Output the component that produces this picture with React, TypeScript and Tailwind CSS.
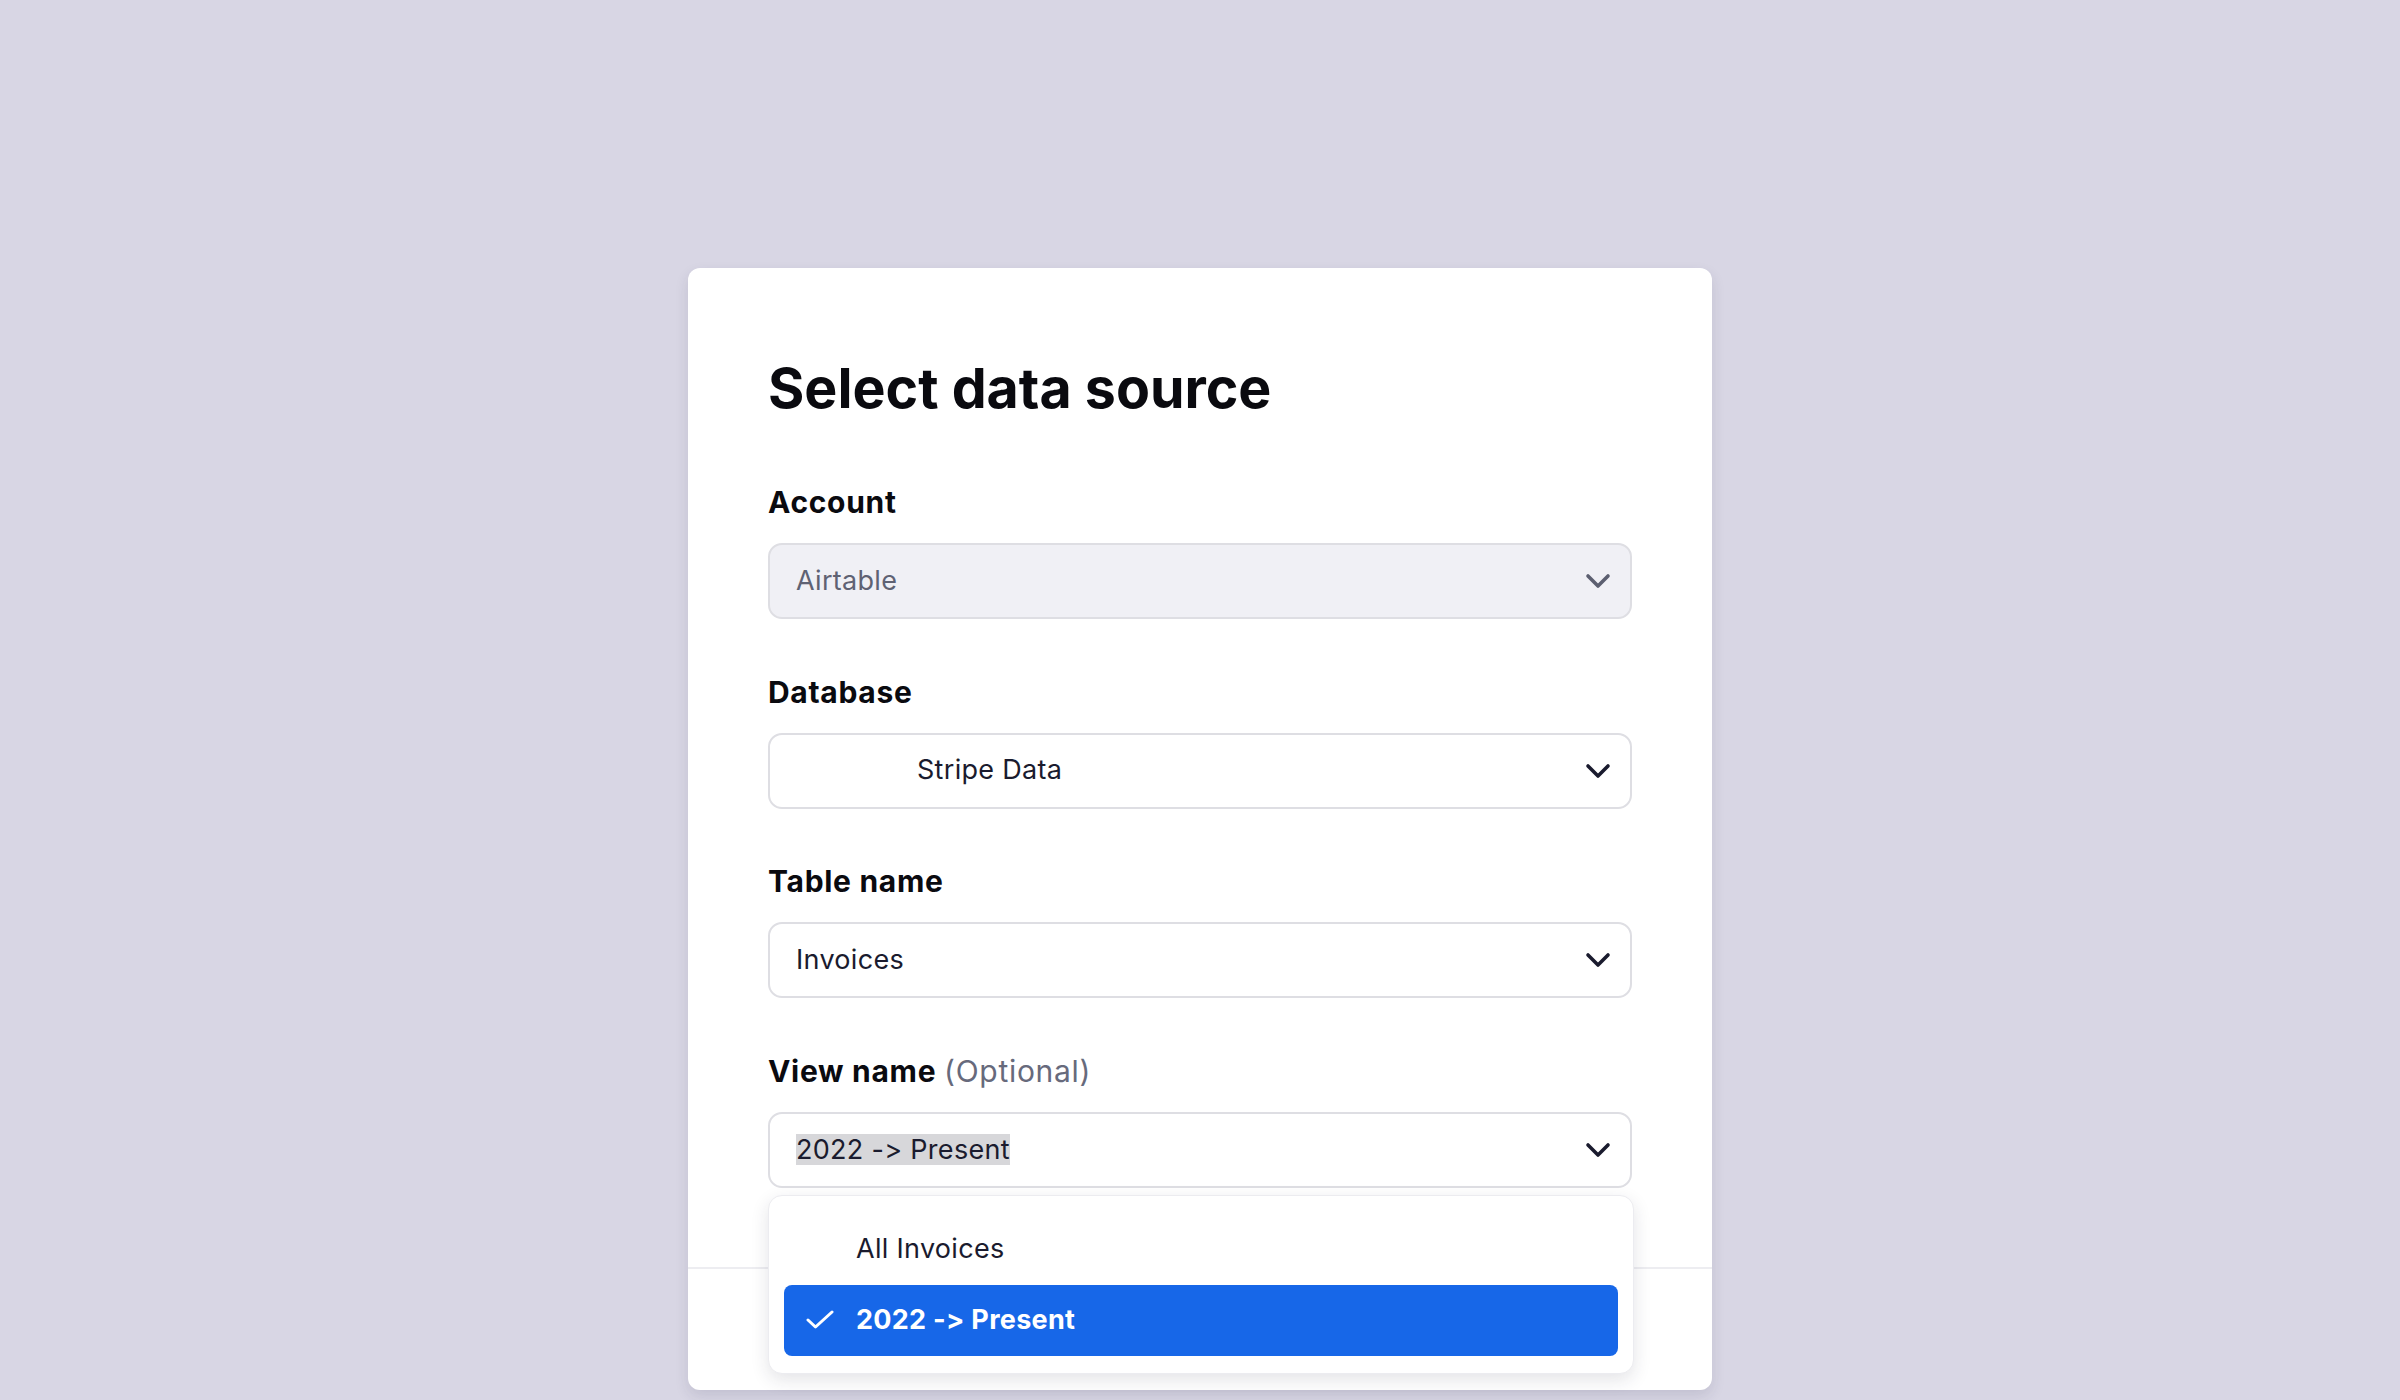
import type { ReactNode } from 'react';

const Chevron = ({ muted = false }: { muted?: boolean }) => (
  <svg width="26" height="16" viewBox="0 0 26 16" fill="none" className="shrink-0">
    <path
      d="M3 3L13 13L23 3"
      stroke={muted ? '#5c5f70' : '#1a1b2e'}
      strokeWidth="3.6"
      strokeLinecap="round"
      strokeLinejoin="round"
    />
  </svg>
);

const Field = ({ label, children }: { label: ReactNode; children: ReactNode }) => (
  <div className="flex flex-col">
    <label className="text-[30px] leading-[36px] font-bold text-[#0a0a0f] tracking-[0.7px] mb-[23px]">{label}</label>
    {children}
  </div>
);

const SelectBox = ({
  children,
  disabled = false,
}: {
  children: ReactNode;
  disabled?: boolean;
}) => (
  <div
    className={`h-[76px] rounded-[14px] border-2 border-[#dedee3] flex items-center justify-between pl-[26px] pr-[19px] text-[27px] tracking-[0.3px] ${
      disabled ? 'bg-[#f0f0f5] text-[#5f6273]' : 'bg-white text-[#1a1b2e]'
    }`}
  >
    <div className="flex items-center">{children}</div>
    <Chevron muted={disabled} />
  </div>
);

export default function App() {
  return (
    <div
      className="min-h-screen bg-[#d8d6e4] flex justify-center pt-[268px] [font-feature-settings:'calt'_0]"
      style={{ fontFamily: 'Inter, "Noto Sans", sans-serif' }}
    >
      <div className="w-[1024px] h-[1122px] bg-white rounded-[12px] shadow-[0_6px_14px_rgba(40,40,70,0.12)] flex flex-col">
        {/* Form */}
        <div className="px-[80px] pt-[87px] flex-1">
          <h1 className="text-[55.5px] leading-[65px] font-bold text-[#0a0a0f] mb-[64px]">
            Select data source
          </h1>

          <div className="flex flex-col gap-[54.5px]">
            <Field label="Account">
              <SelectBox disabled>Airtable</SelectBox>
            </Field>

            <Field label="Database">
              <SelectBox>
                <span className="ml-[121px]">Stripe Data</span>
              </SelectBox>
            </Field>

            <Field label="Table name">
              <SelectBox>Invoices</SelectBox>
            </Field>

            <Field
              label={
                <>
                  View name <span className="font-normal text-[#676a7c]">(Optional)</span>
                </>
              }
            >
              <div className="relative">
                <SelectBox>
                  <span className="bg-[#d7d7da] leading-[31px]">2022 -&gt; Present</span>
                </SelectBox>

                {/* Open menu */}
                <div className="absolute left-0 right-[-2px] top-[83px] z-10 bg-white rounded-[14px] border border-[#ececf0] shadow-[0_6px_18px_rgba(30,30,60,0.12)] px-[15px] pt-[18px] pb-[17px]">
                  <div className="h-[71px] flex items-center pl-[72px] text-[27px] tracking-[0.3px] text-[#1a1b2e]">
                    All Invoices
                  </div>
                  <div className="h-[71px] flex items-center rounded-[8px] bg-[#1767e8] text-white text-[27px] tracking-[0.3px] font-bold">
                    <svg width="30" height="20" viewBox="0 0 30 20" fill="none" className="ml-[21px] mr-[21px]">
                      <path
                        d="M3 10L10.5 17L27 2"
                        stroke="white"
                        strokeWidth="3"
                        strokeLinecap="round"
                        strokeLinejoin="round"
                      />
                    </svg>
                    2022 -&gt; Present
                  </div>
                </div>
              </div>
            </Field>
          </div>
        </div>

        {/* Footer */}
        <div className="h-[123px] border-t-2 border-[#ededf1]" />
      </div>
    </div>
  );
}
